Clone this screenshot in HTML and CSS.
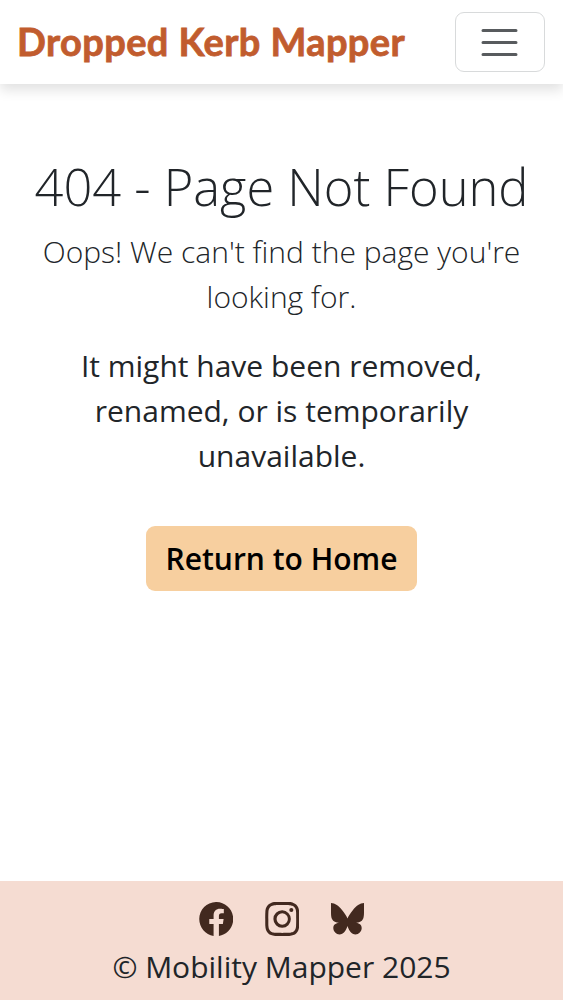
FILE: index.html
```html
<!DOCTYPE html>
<html lang="en">
<head>
<meta charset="utf-8">
<title>Dropped Kerb Mapper</title>
<link rel="stylesheet" href="styles.css">
</head>
<body>
<header class="navbar">
  <a class="brand">Dropped Kerb Mapper</a>
  <button class="toggler" aria-label="Toggle navigation">
    <svg viewBox="0 0 30 30" width="45" height="45" fill="none" stroke="currentColor" stroke-width="2" stroke-linecap="round"><path d="M4 7h22M4 15h22M4 23h22"/></svg>
  </button>
</header>
<main class="content">
  <h1 class="title">404 - Page Not Found</h1>
  <p class="lead">Oops! We can't find the page you're<br>looking for.</p>
  <p class="text">It might have been removed,<br>renamed, or is temporarily<br>unavailable.</p>
  <a class="button">Return to Home</a>
</main>
<footer class="footer">
  <div class="social">
    <svg class="icon" viewBox="0 0 16 16"><path d="M16 8.049c0-4.446-3.582-8.05-8-8.05C3.58 0-.002 3.603-.002 8.05c0 4.017 2.926 7.347 6.75 7.951v-5.625h-2.03V8.05H6.75V6.275c0-2.017 1.195-3.131 3.022-3.131.876 0 1.791.157 1.791.157v1.98h-1.009c-.993 0-1.303.621-1.303 1.258v1.51h2.218l-.354 2.326H9.25V16c3.824-.604 6.75-3.934 6.75-7.951"/></svg>
    <svg class="icon" viewBox="0 0 16 16"><path d="M8 0C5.829 0 5.556.01 4.703.048 3.85.088 3.269.222 2.76.42a3.9 3.9 0 0 0-1.417.923A3.9 3.9 0 0 0 .42 2.76C.222 3.268.087 3.85.048 4.7.01 5.555 0 5.827 0 8.001c0 2.172.01 2.444.048 3.297.04.852.174 1.433.372 1.942.205.526.478.972.923 1.417.444.445.89.719 1.416.923.51.198 1.09.333 1.942.372C5.555 15.99 5.827 16 8 16s2.444-.01 3.298-.048c.851-.04 1.434-.174 1.943-.372a3.9 3.9 0 0 0 1.416-.923c.445-.445.718-.891.923-1.417.197-.509.332-1.09.372-1.942C15.99 10.445 16 10.173 16 8s-.01-2.445-.048-3.299c-.04-.851-.175-1.433-.372-1.941a3.9 3.9 0 0 0-.923-1.417A3.9 3.9 0 0 0 13.24.42c-.51-.198-1.092-.333-1.943-.372C10.443.01 10.172 0 7.998 0zm-.717 1.442h.718c2.136 0 2.389.007 3.232.046.78.035 1.204.166 1.486.275.373.145.64.319.92.599s.453.546.598.92c.11.281.24.705.275 1.485.039.843.047 1.096.047 3.231s-.008 2.389-.047 3.232c-.035.78-.166 1.203-.275 1.485a2.5 2.5 0 0 1-.599.919c-.28.28-.546.453-.92.598-.28.11-.704.24-1.485.276-.843.038-1.096.047-3.232.047s-2.39-.009-3.233-.047c-.78-.036-1.203-.166-1.485-.276a2.5 2.5 0 0 1-.92-.598 2.5 2.5 0 0 1-.6-.92c-.109-.281-.24-.705-.275-1.485-.038-.843-.046-1.096-.046-3.233s.008-2.388.046-3.231c.036-.78.166-1.204.276-1.486.145-.373.319-.64.599-.92s.546-.453.92-.598c.282-.11.705-.24 1.485-.276.738-.034 1.024-.044 2.515-.045zm4.988 1.328a.96.96 0 1 0 0 1.92.96.96 0 0 0 0-1.92m-4.27 1.122a4.109 4.109 0 1 0 0 8.217 4.109 4.109 0 0 0 0-8.217m0 1.441a2.667 2.667 0 1 1 0 5.334 2.667 2.667 0 0 1 0-5.334"/></svg>
    <svg class="icon butterfly" viewBox="0 0 33 34"><path d="M0 1C4 1.200 8 4 11 8c2.500 3.200 4.500 6 5.500 8.500C17.500 14 19.500 11.200 22 8c3-4 7-6.800 11-7v9c0 3-.2 5.500-1 7-1.200 2.500-4 3.800-7 3.800 4 .6 5.700 2.500 5.700 5.200 0 3.300-3 6.500-6.200 6.500-4 0-6.500-4-8-8.500-1.500 4.500-4 8.500-8 8.500-3.200 0-6.200-3.200-6.200-6.500 0-2.700 1.700-4.600 5.700-5.200-3 0-5.800-1.300-7-3.800C.2 15.500 0 13 0 10z"/></svg>
  </div>
  <p class="copyright">© Mobility Mapper 2025</p>
</footer>
</body>
</html>
```

FILE: styles.css
```css
* { box-sizing: border-box; }
body {
  margin: 0;
  width: 563px;
  height: 1002px;
  display: flex;
  flex-direction: column;
  background: #fff;
  color: #212529;
  font: 400 30px/45px "Open Sans", sans-serif;
}
.navbar {
  height: 84px;
  flex: none;
  display: flex;
  align-items: center;
  justify-content: space-between;
  padding: 0 18.5px 0 17px;
  box-shadow: 0 6px 12px rgba(0, 0, 0, .12);
}
.brand {
  padding-bottom: 2px;
  font: 700 38px/56px Lato, sans-serif;
  letter-spacing: .4px;
  -webkit-text-stroke: .8px #c15c2e;
  color: #c15c2e;
  white-space: nowrap;
}
.toggler {
  width: 90px;
  height: 60px;
  padding: 0;
  display: grid;
  place-items: center;
  background: none;
  border: 1.5px solid #d8dadb;
  border-radius: 9px;
  color: #585b5e;
}
.content {
  flex: 1;
  padding-top: 72px;
  text-align: center;
  white-space: nowrap;
}
.title {
  margin: 0 0 11px;
  font-size: 50.6px;
  line-height: 62px;
  font-weight: 300;
}
.lead { margin: 0 0 24px; font-weight: 300; }
.text { margin: 0 0 47.5px; }
.button {
  display: inline-block;
  padding: 10.5px 19.5px 10px;
  border-radius: 9px;
  background: #f7cf9f;
  color: #000;
  font-weight: 600;
}
.footer {
  height: 119px;
  flex: none;
  margin-bottom: 2px;
  padding-top: 21px;
  background: #f5dcd2;
  text-align: center;
}
.social { display: flex; justify-content: center; gap: 31.5px; height: 34px; padding-right: 1px; }
.icon { width: 34.5px; height: 34px; fill: #42291f; }
.butterfly { width: 33px; }
.copyright { margin: 8px 0 0; }
```
